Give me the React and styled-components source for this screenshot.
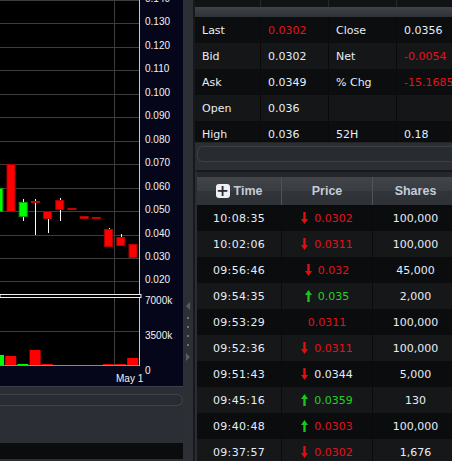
import styled, { createGlobalStyle } from 'styled-components';

const GlobalStyle = createGlobalStyle`
  html, body {
    margin: 0;
    padding: 0;
    background: #2b2e33;
  }
  body {
    font-family: "DejaVu Sans", Verdana, sans-serif;
  }
`;

const RED = '#e5121a';
const GREEN = '#1fd51f';
const WHITE = '#e6edf6';

// price axis: 0.140 at the top, 23.45px per 0.010
const priceY = (p) => (0.14 - p) * 2345;
const slotX = (i) => 11 + 12.2 * i;

const gridPrices = [0.14, 0.13, 0.12, 0.11, 0.1, 0.09, 0.08, 0.07, 0.06, 0.05, 0.04, 0.03, 0.02];

const candles = [
  { i: -1, up: true, top: 188, bottom: 212 },
  { i: 0, up: false, top: 164, bottom: 212 },
  { i: 1, up: true, top: 202, bottom: 217, wt: 199, wb: 221 },
  { i: 2, up: false, top: 201, bottom: 203, wt: 199, wb: 235, doji: true },
  { i: 3, up: false, top: 211, bottom: 219, wt: 211, wb: 233 },
  { i: 4, up: false, top: 200, bottom: 210, wt: 198, wb: 221 },
  { i: 5, up: false, top: 208, bottom: 210, doji: true },
  { i: 6, up: false, top: 216, bottom: 219 },
  { i: 7, up: false, top: 217, bottom: 219, doji: true },
  { i: 8, up: false, top: 229, bottom: 247, wt: 228, wb: 247 },
  { i: 9, up: false, top: 237, bottom: 246, wt: 234, wb: 246 },
  { i: 10, up: false, top: 244, bottom: 258 },
];

const volumes = [
  { i: -1, top: 355, color: '#00ff00' },
  { i: 0, top: 356, color: '#ff0000' },
  { i: 1, top: 364, color: '#00ff00' },
  { i: 2, top: 350, color: '#ff0000' },
  { i: 3, top: 364, color: '#ff0000' },
  { i: 4, top: 365, color: '#b00000' },
  { i: 5, top: 365, color: '#d44a4a' },
  { i: 6, top: 365, color: '#b00000' },
  { i: 7, top: 365, color: '#d44a4a' },
  { i: 8, top: 364, color: '#ff0000' },
  { i: 9, top: 364, color: '#ff0000' },
  { i: 10, top: 358, color: '#ff0000' },
];

const quotes = [
  [['Last'], ['0.0302', RED], ['Close'], ['0.0356']],
  [['Bid'], ['0.0302'], ['Net'], ['-0.0054', RED]],
  [['Ask'], ['0.0349'], ['% Chg'], ['-15.1685', RED]],
  [['Open'], ['0.036'], [''], ['']],
  [['High'], ['0.036'], ['52H'], ['0.18']],
];

const trades = [
  ['10:08:35', 'down', '0.0302', RED, '100,000'],
  ['10:02:06', 'down', '0.0311', RED, '100,000'],
  ['09:56:46', 'down', '0.032', RED, '45,000'],
  ['09:54:35', 'up', '0.035', GREEN, '2,000'],
  ['09:53:29', null, '0.0311', RED, '100,000'],
  ['09:52:36', 'down', '0.0311', RED, '100,000'],
  ['09:51:43', 'down', '0.0344', WHITE, '5,000'],
  ['09:45:16', 'up', '0.0359', GREEN, '130'],
  ['09:40:48', 'up', '0.0303', RED, '100,000'],
  ['09:37:57', 'down', '0.0302', RED, '1,676'],
];

const PriceChart = () => {
  return (
    <ChartSvg width="183" height="386" viewBox="0 0 183 386">
      <rect x="0" y="0" width="139" height="366" fill="#000" />
      {gridPrices.map((p) => (
        <line key={p} x1="0" x2="139" y1={Math.round(priceY(p)) + 0.5} y2={Math.round(priceY(p)) + 0.5} stroke="#3d3d3d" />
      ))}
      <line x1="0" x2="139" y1="331.5" y2="331.5" stroke="#3d3d3d" />
      <line x1="114.5" x2="114.5" y1="0" y2="366" stroke="#3d3d3d" />

      {candles.map((c) => {
        const cx = slotX(c.i);
        const fill = c.up ? '#00ff00' : '#ff0000';
        const edge = c.up ? '#00a800' : '#b00000';
        return (
          <g key={c.i}>
            {c.wt !== undefined && (
              <line x1={Math.round(cx) + 0.5} x2={Math.round(cx) + 0.5} y1={c.wt} y2={c.wb} stroke="#fff" />
            )}
            {c.doji ? (
              <rect x={cx - 4.5} y={c.top} width="9" height="2" fill="#c80000" />
            ) : (
              <rect x={cx - 4} y={c.top + 0.5} width="8" height={c.bottom - c.top - 1} fill={fill} stroke={edge} />
            )}
          </g>
        );
      })}

      {volumes.map((v) => (
        <rect key={v.i} x={slotX(v.i) - 5.8} y={v.top} width="11" height={366 - v.top} fill={v.color} />
      ))}

      <line x1="0" x2="139" y1="365.5" y2="365.5" stroke="#8a8a8a" />
      <line x1="139.5" x2="139.5" y1="0" y2="366" stroke="#c8c8c8" />
      <rect x="0" y="294.5" width="141" height="3" fill="#000" stroke="#eeeeee" />

      <g fill="#f2f2f2" fontFamily="'Liberation Sans', Arial, sans-serif" fontSize="10">
        {gridPrices.map((p) => (
          <text key={p} x="145" y={priceY(p) + 2}>{p.toFixed(3)}</text>
        ))}
        <text x="145" y="304">7000k</text>
        <text x="145" y="339">3500k</text>
        <text x="145" y="374">0</text>
        <text x="116" y="382">May 1</text>
      </g>
    </ChartSvg>
  );
};

const Arrow = ({ dir }) => {
  const color = dir === 'up' ? '#19c619' : '#e01010';
  const d =
    dir === 'up'
      ? 'M3.5 0 L7 5 L4.7 5 L4.7 12 L2.3 12 L2.3 5 L0 5 Z'
      : 'M2.3 0 L4.7 0 L4.7 7 L7 7 L3.5 12 L0 7 L2.3 7 Z';
  return (
    <ArrowSvg width="7" height="12" viewBox="0 0 7 12">
      <path d={d} fill={color} />
    </ArrowSvg>
  );
};

const App = () => {
  return (
    <Screen>
      <GlobalStyle />
      <LeftPane>
        <PriceChart />
        <ScrollArea>
          <LeftTrack />
        </ScrollArea>
        <BlackStrip />
      </LeftPane>

      <Splitter>
        <GripLeft />
        <GripDot />
        <GripDot />
        <GripDot />
        <GripDot />
        <GripRight />
      </Splitter>
      <SplitLine />

      <RightPane>
        <TopStrip>
          <StripCell $w={66} />
          <StripCell $w={68} />
          <StripCell $w={68} />
          <StripCell $w={68} />
        </TopStrip>
        <QuoteHeader />
        <QuoteBox>
          {quotes.map((row, r) => (
            <QuoteRow key={r} $alt={r % 2 === 1}>
              {row.map(([text, color], c) => (
                <QuoteCell key={c} $w={c === 0 ? 66 : 68} $color={color}>
                  {text}
                </QuoteCell>
              ))}
            </QuoteRow>
          ))}
        </QuoteBox>
        <ScrollBand>
          <RightTrack />
        </ScrollBand>

        <TradePanel>
          <TradeHeader>
            <HeadCell>
              <AddIcon>+</AddIcon>
              Time
            </HeadCell>
            <HeadCell>Price</HeadCell>
            <HeadCell>Shares</HeadCell>
          </TradeHeader>
          {trades.map(([time, dir, price, color, shares], r) => (
            <TradeRow key={r} $alt={r % 2 === 1}>
              <TimeCell>{time}</TimeCell>
              <TradeCell $color={color}>
                {dir && <Arrow dir={dir} />}
                {price}
              </TradeCell>
              <TradeCell>{shares}</TradeCell>
            </TradeRow>
          ))}
        </TradePanel>
      </RightPane>
    </Screen>
  );
};

const Screen = styled.div`
  width: 452px;
  height: 461px;
  display: flex;
  overflow: hidden;
  background: #2b2e33;
`;

const LeftPane = styled.div`
  width: 183px;
  display: flex;
  flex-direction: column;
  flex-shrink: 0;
  & > * {
    flex-shrink: 0;
  }
`;

const ChartSvg = styled.svg`
  display: block;
  background: #06061a;
  border-bottom: 1px solid #3a3e45;
`;

const ScrollArea = styled.div`
  height: 56px;
  padding-top: 7px;
  box-sizing: border-box;
  background: #2b2f35;
`;

const LeftTrack = styled.div`
  height: 10px;
  border: 1px solid #3f444b;
  border-left: none;
  border-radius: 0 6px 6px 0;
  background: #282c31;
`;

const BlackStrip = styled.div`
  height: 16px;
  background: #0b0c0e;
`;

const Splitter = styled.div`
  width: 10px;
  flex-shrink: 0;
  background: #2c2f34;
  display: flex;
  flex-direction: column;
  align-items: center;
  gap: 7px;
  padding-top: 302px;
  box-sizing: border-box;
`;

const GripLeft = styled.div`
  width: 0;
  height: 0;
  border-top: 4px solid transparent;
  border-bottom: 4px solid transparent;
  border-right: 4px solid #5a5e64;
`;

const GripRight = styled.div`
  width: 0;
  height: 0;
  border-top: 4px solid transparent;
  border-bottom: 4px solid transparent;
  border-left: 4px solid #5a5e64;
`;

const GripDot = styled.div`
  width: 2px;
  height: 2px;
  background: #6d7178;
`;

const SplitLine = styled.div`
  width: 2px;
  flex-shrink: 0;
  background: #18191c;
`;

const RightPane = styled.div`
  width: 257px;
  flex-shrink: 0;
  display: flex;
  flex-direction: column;
  overflow: hidden;
  font-size: 11px;
  color: ${WHITE};
  & > * {
    flex-shrink: 0;
  }
`;

const TopStrip = styled.div`
  height: 7px;
  display: flex;
  background: #121315;
`;

const StripCell = styled.div`
  width: ${(p) => p.$w}px;
  flex-shrink: 0;
  border-right: 1px solid #25272a;
  box-sizing: border-box;
`;

const QuoteHeader = styled.div`
  height: 10px;
  background: linear-gradient(#404348, #2e3135);
`;

const QuoteBox = styled.div`
  height: 125px;
  overflow: hidden;
`;

const QuoteRow = styled.div`
  height: 26px;
  display: flex;
  background: ${(p) => (p.$alt ? '#151618' : '#0c0d0f')};
`;

const QuoteCell = styled.div`
  width: ${(p) => p.$w}px;
  flex-shrink: 0;
  box-sizing: border-box;
  padding-left: 7px;
  display: flex;
  align-items: center;
  white-space: nowrap;
  color: ${(p) => p.$color || WHITE};
  border-right: 1px solid #0a0a0c;
`;

const ScrollBand = styled.div`
  height: 28px;
  box-sizing: border-box;
  padding: 3px 0 0 2px;
  background: #2b2e33;
  border-top: 1px solid #222428;
`;

const RightTrack = styled.div`
  height: 16px;
  box-sizing: border-box;
  border: 1px solid #3b3f46;
  border-right: none;
  border-radius: 6px 0 0 6px;
  background: #282b30;
`;

const TradePanel = styled.div`
  flex: 1 1 auto;
  min-height: 0;
  overflow: hidden;
  background: #0b0c0e;
  border-top: 2px solid #18191c;
  border-left: 2px solid #2a2d31;
  padding-top: 5px;
  box-shadow: inset 0 5px 0 #25272b;
`;

const TradeHeader = styled.div`
  height: 28px;
  display: grid;
  grid-template-columns: 85px 91px 86px;
  background: linear-gradient(#414449, #393c40 50%, #313438 51%, #2e3135);
`;

const HeadCell = styled.div`
  display: flex;
  align-items: center;
  justify-content: center;
  gap: 4px;
  border-right: 1px solid #505358;
  font-family: "Liberation Sans", Arial, sans-serif;
  font-weight: bold;
  font-size: 12.5px;
  color: #c3ccd8;
`;

const AddIcon = styled.span`
  width: 14px;
  height: 14px;
  border-radius: 3px;
  background: #eef0f2;
  color: #2a2c30;
  display: flex;
  align-items: center;
  justify-content: center;
  font-family: "DejaVu Sans", sans-serif;
  font-size: 15px;
  font-weight: bold;
  line-height: 1;
`;

const TradeRow = styled.div`
  height: 26px;
  display: grid;
  grid-template-columns: 85px 91px 86px;
  background: ${(p) => (p.$alt ? '#161719' : '#0b0c0e')};
`;

const TradeCell = styled.div`
  display: flex;
  align-items: center;
  justify-content: center;
  gap: 6px;
  border-right: 1px solid #0a0a0b;
  color: ${(p) => p.$color || WHITE};
  white-space: nowrap;
`;

const TimeCell = styled(TradeCell)`
  letter-spacing: 0.35px;
`;

const ArrowSvg = styled.svg`
  display: block;
  flex-shrink: 0;
`;

export default App;
